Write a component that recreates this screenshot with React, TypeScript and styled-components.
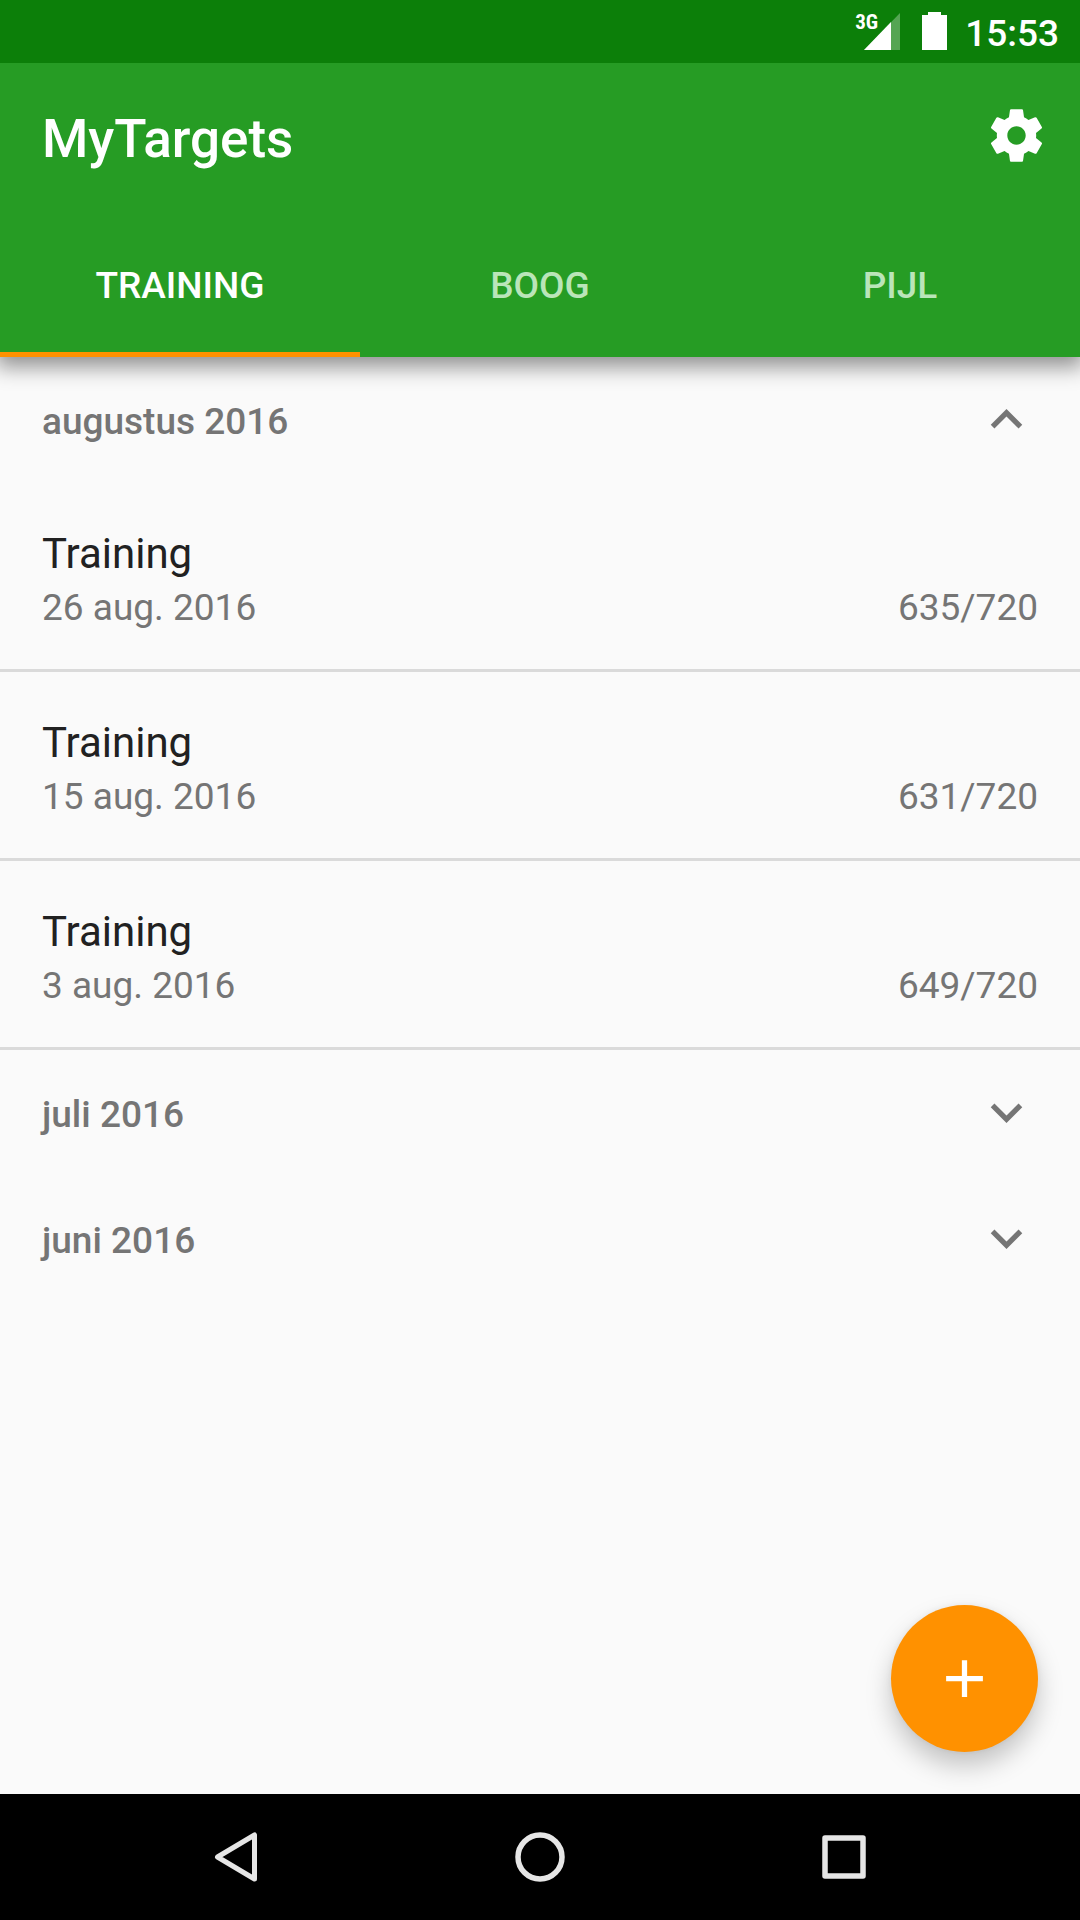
import React, { useState } from 'react';
import styled, { createGlobalStyle } from 'styled-components';

const GlobalStyle = createGlobalStyle`
    * {
        box-sizing: border-box;
    }

    body {
        margin: 0;
        background-color: #fafafa;
        font-family: Roboto, sans-serif;
    }

    button {
        padding: 0;
        border: 0;
        background: none;
        color: inherit;
        font: inherit;
        cursor: pointer;
    }

    svg {
        display: block;
    }
`;

const Page = styled.div`
    display: flex;
    flex-direction: column;
    min-height: 100vh;
`;

const StatusBar = styled.div`
    position: relative;
    z-index: 2;
    display: flex;
    align-items: center;
    justify-content: flex-end;
    height: 63px;
    padding: 0 21px 1px;
    background-color: #0c7f09;
    color: #fff;
`;

const Network = styled.div`
    position: relative;
    margin-right: 22px;
    padding-left: 9px;
`;

const NetworkType = styled.span`
    position: absolute;
    top: -1px;
    left: 0;
    font-family: 'Roboto Condensed', Roboto, sans-serif;
    font-size: 21px;
    font-weight: 700;
    line-height: 20px;
`;

const Clock = styled.time`
    margin-left: 18px;
    padding-top: 6px;
    font-size: 37px;
    font-weight: 500;
    line-height: 44px;
`;

const AppBar = styled.header`
    position: relative;
    z-index: 1;
    background-color: #269c24;
    color: #fff;
    box-shadow: 0 6px 20px 4px rgba(0, 0, 0, 0.42);
`;

const Toolbar = styled.div`
    display: flex;
    align-items: center;
    justify-content: space-between;
    height: 144px;
    padding: 0 32px 0 42px;
`;

const Title = styled.h1`
    margin: 0;
    padding-top: 7px;
    font-size: 53px;
    font-weight: 500;
    line-height: 62px;
`;

const Tabs = styled.div`
    display: flex;
`;

const Tab = styled.button<{ $active: boolean }>`
    flex: 1;
    height: 150px;
    padding-top: 11px;
    border-bottom: 5px solid ${({ $active }) => ($active ? '#ff9100' : 'transparent')};
    color: ${({ $active }) => ($active ? '#fff' : '#bae5b9')};
    font-size: 37px;
    font-weight: 500;
    text-transform: uppercase;
`;

const Content = styled.main`
    position: relative;
    flex: 1;
    padding-bottom: 231px;
`;

const MonthButton = styled.button`
    display: flex;
    align-items: center;
    justify-content: space-between;
    width: 100%;
    height: 126px;
    padding: 0 42px 2px;
    color: #757575;
    font-size: 37px;
    font-weight: 500;
`;

const MonthName = styled.span`
    padding-top: 4px;
`;

const List = styled.ul`
    margin: 0;
    padding: 0;
    list-style: none;
`;

const Item = styled.li`
    height: 189px;
    padding: 42px 42px 0;
    border-bottom: 3px solid #dadada;
`;

const ItemTitle = styled.div`
    color: #212121;
    font-size: 42px;
    line-height: 58px;
`;

const ItemDetails = styled.div`
    display: flex;
    justify-content: space-between;
    color: #757575;
    font-size: 37px;
    line-height: 50px;
`;

const AddButton = styled.button`
    position: absolute;
    right: 42px;
    bottom: 42px;
    display: flex;
    align-items: center;
    justify-content: center;
    width: 147px;
    height: 147px;
    border-radius: 50%;
    background-color: #ff9100;
    color: #fff;
    box-shadow: 0 14px 26px rgba(0, 0, 0, 0.22), 0 0 6px rgba(0, 0, 0, 0.06);
`;

const NavBar = styled.nav`
    display: flex;
    justify-content: center;
    height: 126px;
    background-color: #000;
`;

const NavButton = styled.button`
    display: flex;
    flex: 0 1 304px;
    align-items: center;
    justify-content: center;
`;

const tabs = ['Training', 'Boog', 'Pijl'];

const months = [
    {
        name: 'augustus 2016',
        trainings: [
            { title: 'Training', date: '26 aug. 2016', score: '635/720' },
            { title: 'Training', date: '15 aug. 2016', score: '631/720' },
            { title: 'Training', date: '3 aug. 2016', score: '649/720' },
        ],
    },
    { name: 'juli 2016', trainings: [] },
    { name: 'juni 2016', trainings: [] },
];

const SignalIcon = () => (
    <svg width="36" height="37" viewBox="0 0 36 37" fill="#fff">
        <path d="M36 0v37H0z" opacity="0.3" />
        <path d="M27 9v28H0z" />
    </svg>
);

const BatteryIcon = () => (
    <svg width="25" height="38" viewBox="0 0 25 38" fill="#fff">
        <path d="M6 0h13v3h6v35H0V3h6z" />
    </svg>
);

const SettingsIcon = () => (
    <svg width="63" height="63" viewBox="0 0 24 24" fill="currentColor">
        <path d="M19.43 12.98c.04-.32.07-.64.07-.98s-.03-.66-.07-.98l2.11-1.65c.19-.15.24-.42.12-.64l-2-3.46c-.12-.22-.39-.3-.61-.22l-2.49 1c-.52-.4-1.08-.73-1.69-.98l-.38-2.65C14.46 2.18 14.25 2 14 2h-4c-.25 0-.46.18-.49.42l-.38 2.65c-.61.25-1.17.59-1.69.98l-2.49-1c-.23-.09-.49 0-.61.22l-2 3.46c-.13.22-.07.49.12.64l2.11 1.65c-.04.32-.07.65-.07.98s.03.66.07.98l-2.11 1.65c-.19.15-.24.42-.12.64l2 3.46c.12.22.39.3.61.22l2.49-1c.52.4 1.08.73 1.69.98l.38 2.65c.03.24.24.42.49.42h4c.25 0 .46-.18.49-.42l.38-2.65c.61-.25 1.17-.59 1.69-.98l2.49 1c.23.09.49 0 .61-.22l2-3.46c.12-.22.07-.49-.12-.64l-2.11-1.65zM12 15.5c-1.93 0-3.5-1.57-3.5-3.5s1.57-3.5 3.5-3.5 3.5 1.57 3.5 3.5-1.57 3.5-3.5 3.5z" />
    </svg>
);

const ChevronIcon = ({ up }: { up: boolean }) => (
    <svg width="63" height="63" viewBox="0 0 24 24" fill="currentColor">
        {up ? (
            <path d="M12 8l-6 6 1.41 1.41L12 10.83l4.59 4.58L18 14z" />
        ) : (
            <path d="M16.59 8.59L12 13.17 7.41 8.59 6 10l6 6 6-6z" />
        )}
    </svg>
);

const PlusIcon = () => (
    <svg width="63" height="63" viewBox="0 0 24 24" fill="currentColor">
        <path d="M19 13h-6v6h-2v-6H5v-2h6V5h2v6h6v2z" />
    </svg>
);

const App = () => {
    const [activeTab, setActiveTab] = useState('Training');
    const [openMonth, setOpenMonth] = useState('augustus 2016');

    return (
        <Page>
            <GlobalStyle />
            <StatusBar>
                <Network>
                    <NetworkType>3G</NetworkType>
                    <SignalIcon />
                </Network>
                <BatteryIcon />
                <Clock>15:53</Clock>
            </StatusBar>
            <AppBar>
                <Toolbar>
                    <Title>MyTargets</Title>
                    <button type="button" aria-label="Settings">
                        <SettingsIcon />
                    </button>
                </Toolbar>
                <Tabs role="tablist">
                    {tabs.map((tab) => (
                        <Tab
                            key={tab}
                            type="button"
                            role="tab"
                            aria-selected={tab === activeTab}
                            $active={tab === activeTab}
                            onClick={() => setActiveTab(tab)}
                        >
                            {tab}
                        </Tab>
                    ))}
                </Tabs>
            </AppBar>
            <Content>
                {months.map(({ name, trainings }) => {
                    const open = name === openMonth;
                    return (
                        <section key={name}>
                            <MonthButton
                                type="button"
                                aria-expanded={open}
                                onClick={() => setOpenMonth(open ? '' : name)}
                            >
                                <MonthName>{name}</MonthName>
                                <ChevronIcon up={open} />
                            </MonthButton>
                            {open && (
                                <List>
                                    {trainings.map(({ title, date, score }) => (
                                        <Item key={date}>
                                            <ItemTitle>{title}</ItemTitle>
                                            <ItemDetails>
                                                <span>{date}</span>
                                                <span>{score}</span>
                                            </ItemDetails>
                                        </Item>
                                    ))}
                                </List>
                            )}
                        </section>
                    );
                })}
                <AddButton type="button" aria-label="Add training">
                    <PlusIcon />
                </AddButton>
            </Content>
            <NavBar>
                <NavButton type="button" aria-label="Back">
                    <svg width="50" height="50" viewBox="0 0 50 50" fill="none" stroke="#e6e6e6" strokeWidth="5" strokeLinejoin="round">
                        <path d="M43.500 3v44L6.500 25z" />
                    </svg>
                </NavButton>
                <NavButton type="button" aria-label="Home">
                    <svg width="50" height="50" viewBox="0 0 50 50" fill="none" stroke="#e6e6e6" strokeWidth="5.5">
                        <circle cx="25" cy="25" r="22" />
                    </svg>
                </NavButton>
                <NavButton type="button" aria-label="Overview">
                    <svg width="50" height="50" viewBox="0 0 50 50" fill="none" stroke="#e6e6e6" strokeWidth="5.5" strokeLinejoin="round">
                        <rect x="6" y="6" width="38" height="38" />
                    </svg>
                </NavButton>
            </NavBar>
        </Page>
    );
};

export default App;
